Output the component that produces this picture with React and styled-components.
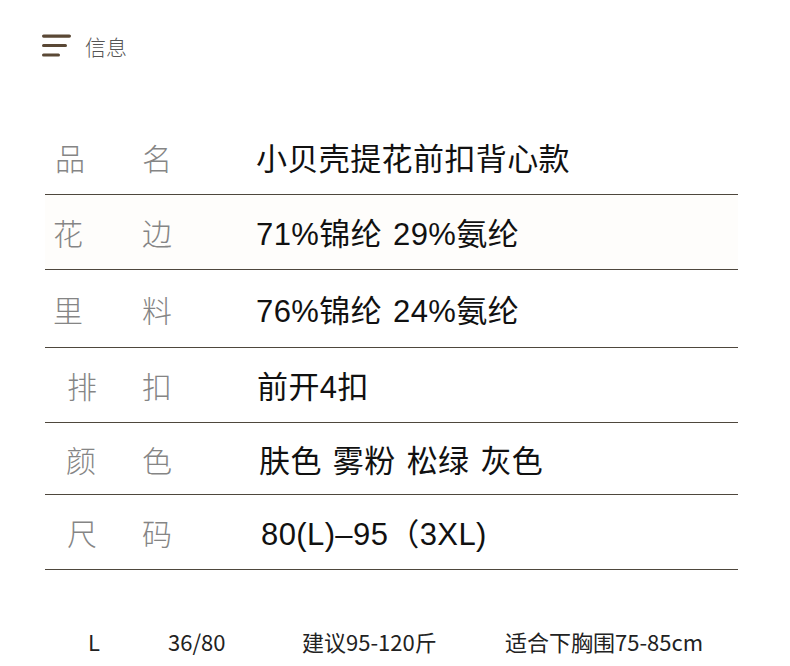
import React from 'react'
import styled, { createGlobalStyle } from 'styled-components'

const GlobalStyle = createGlobalStyle`
  body {
    margin: 0;
    background: #fff;
    font-family: "Noto Sans CJK SC", "Noto Sans", sans-serif;
  }
`

const Page = styled.div`
  width: 790px;
  height: 666px;
  overflow: hidden;
  background: #fff;
`

const Header = styled.div`
  display: flex;
  align-items: center;
  gap: 13px;
  padding: 31px 0 0 42px;
  height: 30px;
`

const HeaderTitle = styled.span`
  font-size: 21px;
  color: #555;
  font-weight: 300;
  line-height: 30px;
`

const Table = styled.div`
  margin: 58px 52px 0 45px;
`

const Row = styled.div`
  display: flex;
  align-items: center;
  box-sizing: border-box;
  height: ${p => p.h}px;
  border-bottom: 1px solid #4e473d;
  background: ${p => (p.tint ? '#fefdfb' : '#fff')};
`

const Label = styled.div`
  display: grid;
  grid-template-columns: 97px 1fr;
  width: 211px;
  flex: none;
  font-size: 30px;
  font-weight: 200;
  color: #858585;
  line-height: 1;
`

const LabelChar = styled.span`
  padding-left: ${p => p.indent || 0}px;
`

const Value = styled.div`
  padding-left: ${p => p.indent}px;
  padding-top: 5px;
  font-family: "Liberation Sans", "Noto Sans CJK SC", sans-serif;
  font-size: 31px;
  color: #111;
  line-height: 1;
  white-space: nowrap;
  word-spacing: 2px;
  letter-spacing: 0.4px;
`

const SizeRow = styled.div`
  display: flex;
  align-items: center;
  margin-top: 60px;
  padding-left: 88px;
  font-size: 22px;
  color: #222;
  line-height: 1;
`

const SizeCell = styled.span`
  flex: none;
  width: ${p => p.w}px;
  white-space: nowrap;
`

function MenuIcon() {
  return (
    <svg width="30" height="26" viewBox="0 0 30 26">
      <rect x="0" y="1.5" width="29" height="3.2" rx="1.6" fill="#5a4835" />
      <rect x="0" y="11" width="25" height="3" rx="1.5" fill="#5a4835" />
      <rect x="0" y="20.5" width="18" height="3" rx="1.5" fill="#5a4835" />
    </svg>
  )
}

const rows = [
  { a: '品', b: '名', value: '小贝壳提花前扣背心款', h: 76, li: 10, vi: 0, tint: false },
  { a: '花', b: '边', value: '71%锦纶 29%氨纶', h: 75, li: 8, vi: 0, tint: true },
  { a: '里', b: '料', value: '76%锦纶 24%氨纶', h: 78, li: 8, vi: -4, tint: false },
  { a: '排', b: '扣', value: '前开4扣', h: 75, li: 22, vi: 1, tint: false },
  { a: '颜', b: '色', value: '肤色 雾粉 松绿 灰色', h: 72, li: 21, vi: 3, tint: false },
  { a: '尺', b: '码', value: '80(L)–95（3XL)', h: 75, li: 22, vi: 5, tint: false },
]

export default function App() {
  return (
    <Page>
      <GlobalStyle />
      <Header>
        <MenuIcon />
        <HeaderTitle>信息</HeaderTitle>
      </Header>
      <Table>
        {rows.map(r => (
          <Row key={r.a} h={r.h} tint={r.tint}>
            <Label>
              <LabelChar indent={r.li}>{r.a}</LabelChar>
              <LabelChar>{r.b}</LabelChar>
            </Label>
            <Value indent={r.vi}>{r.value}</Value>
          </Row>
        ))}
      </Table>
      <SizeRow>
        <SizeCell w={80}>L</SizeCell>
        <SizeCell w={134}>36/80</SizeCell>
        <SizeCell w={203}>建议95-120斤</SizeCell>
        <SizeCell w={240}>适合下胸围75-85cm</SizeCell>
      </SizeRow>
    </Page>
  )
}
